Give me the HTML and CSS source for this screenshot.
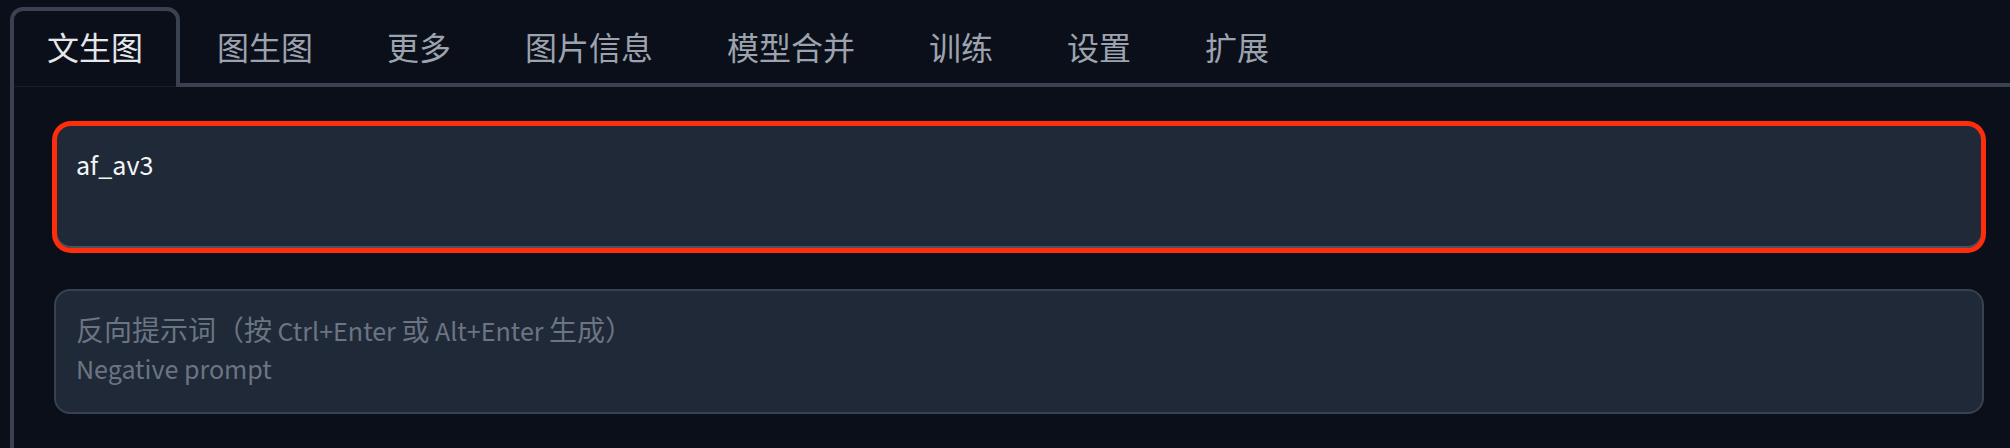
FILE: index.html
```html
<!DOCTYPE html>
<html lang="zh-CN">
<head>
<meta charset="utf-8">
<title>txt2img</title>
<link rel="stylesheet" href="styles.css">
</head>
<body>
<div class="tabs">
  <div class="tab-nav">
    <button class="tab selected">文生图</button>
    <button class="tab">图生图</button>
    <button class="tab">更多</button>
    <button class="tab">图片信息</button>
    <button class="tab">模型合并</button>
    <button class="tab">训练</button>
    <button class="tab">设置</button>
    <button class="tab">扩展</button>
  </div>
  <div class="tabitem">
    <textarea class="prompt focused" rows="3">af_av3</textarea>
    <textarea class="prompt negative" rows="2" placeholder="反向提示词（按 Ctrl+Enter 或 Alt+Enter 生成）&#10;Negative prompt"></textarea>
  </div>
</div>
</body>
</html>
```
FILE: styles.css
```css
html, body {
  margin: 0;
  padding: 0;
  background: #0b0f19;
  overflow: hidden;
}

body {
  width: 2010px;
  height: 448px;
  font-family: "Source Sans 3", "Source Sans Pro", "Noto Sans CJK SC", sans-serif;
}

.tabs {
  margin: 7px 0 0 10px;
}

.tab-nav {
  display: flex;
  border-bottom: 4px solid #3a4251;
}

.tab {
  box-sizing: border-box;
  height: 80px;
  margin-bottom: -4px;
  padding: 0 33px 7px 33px;
  border: 4px solid transparent;
  border-bottom: none;
  border-radius: 13px 13px 0 0;
  background: transparent;
  color: #9ca3af;
  font-family: "Noto Sans CJK SC", sans-serif;
  font-size: 32px;
  line-height: 40px;
  display: flex;
  align-items: center;
  cursor: pointer;
}

.tab.selected {
  border-color: #3a4251;
  background: #0b0f19;
  color: #e5e7eb;
  box-shadow: inset 0 -1px 0 #161c28;
}

.tabitem {
  border-left: 4px solid #3a4251;
  padding: 36px 0 40px 40px;
  display: flex;
  flex-direction: column;
  gap: 38px;
}

.prompt {
  display: block;
  box-sizing: border-box;
  width: 1930px;
  margin: 0;
  resize: none;
  overflow: hidden;
  outline: none;
  background: #1f2937;
  color: #f3f4f6;
  font-family: "Source Sans 3", "Source Sans Pro", "Noto Sans CJK SC", sans-serif;
  font-size: 28px;
  line-height: 38px;
  border-radius: 17px;
}

.prompt.focused {
  height: 128px;
  padding: 21px 19px 18px 19px;
  border: 3px solid #ff2d0c;
  box-shadow: 0 0 0 2px #ff2d0c, inset 0 -2px 0 #4a5160;
}

.prompt.negative {
  height: 125px;
  padding: 22px 20px 19px 20px;
  border: 2px solid #384150;
  border-radius: 16px;
}

.prompt::placeholder {
  color: #6b7482;
  opacity: 1;
}
```
